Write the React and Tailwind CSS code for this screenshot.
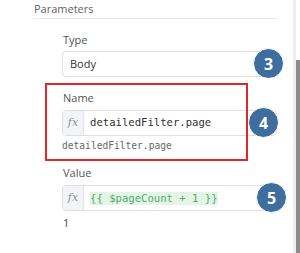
import React from "react";

const mono = { fontFamily: '"DejaVu Sans Mono", "Liberation Mono", monospace' };

// numbered markers drawn over the form
const Badge = ({ n, className }) => (
  <div
    className={`absolute w-[31px] h-[31px] rounded-full bg-[#3d6e9e] border-[1.5px] border-white flex items-center justify-center text-white text-[16px] font-bold leading-none ${className}`}
  >
    {n}
  </div>
);

const Fx = () => (
  <span
    className="w-[21px] shrink-0 h-full flex items-center justify-center bg-[#f3f4f7] border-r border-[#e2e4ea] text-[#8a8d96] italic text-[11px]"
    style={{ fontFamily: '"DejaVu Serif", "Liberation Serif", serif' }}
  >
    fx
  </span>
);

const Label = ({ children }) => (
  <div className="pl-[1px] text-[11px] leading-[16px] text-[#555]">{children}</div>
);

const Box = ({ children, fx }) => (
  <div className="h-[26px] rounded-[4px] border border-[#dcdfe6] flex items-center overflow-hidden">
    {fx && <Fx />}
    {children}
  </div>
);

const App = () => {
  return (
    <div
      className="relative w-[300px] h-[253px] overflow-hidden bg-white"
      style={{ fontFamily: '"Open Sans", "Noto Sans", sans-serif' }}
    >
      <div className="pl-[34px] w-[277px] flex flex-col">
        <div className="pt-[1px] h-[17px] text-[11px] leading-[16px] text-[#5f6368] border-b border-[#e6e8ee] box-content">
          Parameters
        </div>
        <div className="pl-[28px] pt-[13px] flex flex-col gap-[13px]">
          <div className="flex flex-col gap-[3px]">
            <Label>Type</Label>
            <Box>
              <span className="pl-[7px] text-[11px] text-[#333]">Body</span>
            </Box>
          </div>
          <div className="flex flex-col gap-[4px]">
            <Label>Name</Label>
            <Box fx>
              <span className="pl-[6px] text-[10.6px] text-[#333]" style={mono}>
                detailedFilter.page
              </span>
            </Box>
            <div className="text-[9.6px] leading-[12px] text-[#666]" style={mono}>
              detailedFilter.page
            </div>
          </div>
          <div className="flex flex-col gap-[4px]">
            <Label>Value</Label>
            <Box fx>
              <span className="ml-[6px] bg-[#e4f5e8] text-[#52ad66] text-[10.6px] leading-[13px]" style={mono}>
                {"{{ $pageCount + 1 }}"}
              </span>
            </Box>
            <div className="pl-[1px] text-[11px] leading-[16px] text-[#444]">1</div>
          </div>
        </div>
      </div>

      {/* annotation */}
      <div className="absolute left-[45px] top-[83px] w-[203px] h-[78px] border-2 border-[#e3262b]" />
      <Badge n="3" className="left-[253px] top-[48px]" />
      <Badge n="4" className="left-[248px] top-[107px]" />
      <Badge n="5" className="left-[256px] top-[182px]" />

      {/* scrollbar */}
      <div className="absolute right-[4px] top-0 w-[3px] h-full bg-[#efefef]" />
      <div className="absolute right-0 top-[60px] w-[4px] bottom-0 bg-[#8c8c8c]" />
    </div>
  );
};

export default App;
